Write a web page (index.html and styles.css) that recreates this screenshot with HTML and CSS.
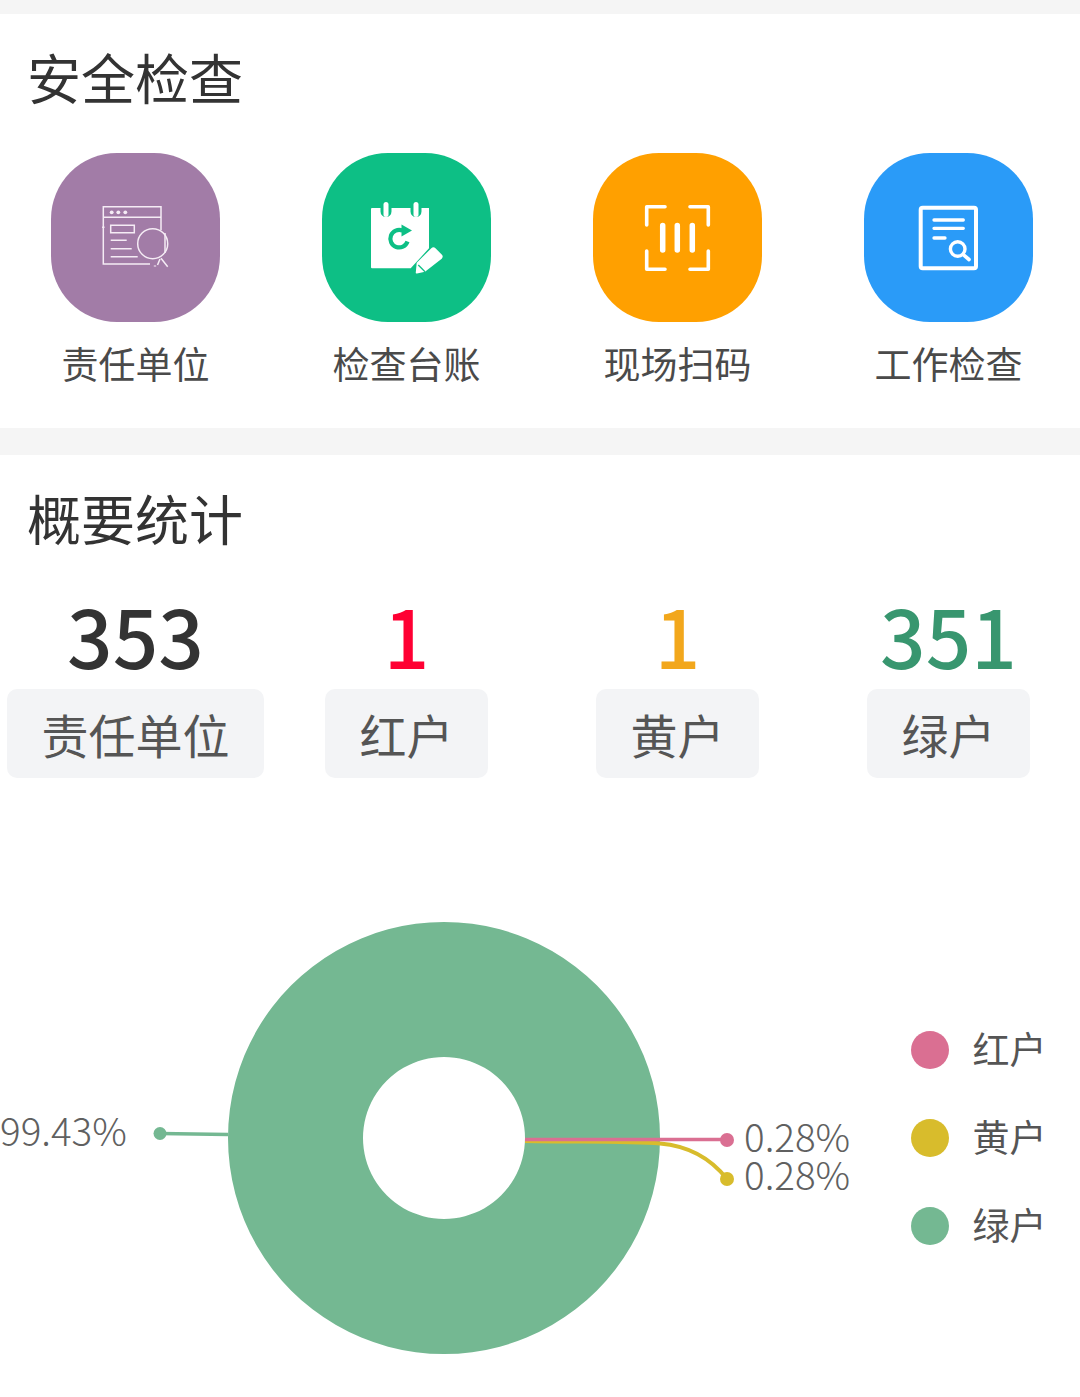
FILE: index.html
```html
<!DOCTYPE html>
<html lang="zh-CN">
<head>
<meta charset="utf-8">
<title>安全检查</title>
<link rel="stylesheet" href="styles.css">
</head>
<body>
<main class="page">
  <section class="card card-safety">
    <h2 class="title">安全检查</h2>
    <div class="grid grid-icons">
      <a class="entry">
        <span class="tile tile-purple">
          <svg class="glyph" viewBox="0 0 169 169" fill="none" stroke="#f5ecf5" stroke-width="1.500">
            <path d="M99 111H52.300V53.700H110V77"/>
            <path d="M52.300 64.300H110"/>
            <circle cx="60.700" cy="59.300" r="1.900" fill="#f5ecf5" stroke="none"/>
            <circle cx="67.300" cy="59.300" r="1.900" fill="#f5ecf5" stroke="none"/>
            <circle cx="74.300" cy="59.300" r="1.900" fill="#f5ecf5" stroke="none"/>
            <path d="M59.700 72.300H83.300V79.700H59.700z"/>
            <path d="M59.700 87.300H75.700M59.700 95.700H80.700M59.700 103.700H86.700"/>
            <circle cx="101.700" cy="90.700" r="15"/>
            <path d="M114 80V100M110 105.300L116.700 113.700M109 106L106.500 112"/>
            <path d="M104 112.500V113.500M52.300 73.500V75" stroke-width="2.400"/>
          </svg>
        </span>
        <span class="entry-label">责任单位</span>
      </a>
      <a class="entry">
        <span class="tile tile-green">
          <svg class="glyph" viewBox="0 0 169 169">
            <path fill="#fff" d="M50 55H58.500V58.500A5.500 5.500 0 0 0 69.500 58.500V55H88.500V58.500A5.500 5.500 0 0 0 99.500 58.500V55H107V95.300L88.700 115.300H50A1 1 0 0 1 49 114.300V56A1 1 0 0 1 50 55Z"/>
            <rect x="61.500" y="49" width="5" height="15" rx="2.500" fill="#fff"/>
            <rect x="91.500" y="49" width="5" height="15" rx="2.500" fill="#fff"/>
            <path fill="none" stroke="#0dbf85" stroke-width="4.200" d="M85.500 88.500A8.800 8.800 0 1 1 80.500 77.500"/>
            <path fill="#0dbf85" d="M79.500 71.500L90 77.500L79.500 83.500Z"/>
            <path fill="#fff" d="M109.300 95.300A3 3 0 0 1 113.500 95.300L119.700 101.500A3 3 0 0 1 119.700 105.700L103 118.700L95 120.500A1 1 0 0 1 93.800 119.300L94.700 109.700Z"/>
            <path fill="none" stroke="#0dbf85" stroke-width="1.300" d="M96.300 112L103 118.700"/>
          </svg>
        </span>
        <span class="entry-label">检查台账</span>
      </a>
      <a class="entry">
        <span class="tile tile-orange">
          <svg class="glyph" viewBox="0 0 169 169" fill="none" stroke="#fff" stroke-width="3.600" stroke-linecap="round" stroke-linejoin="round">
            <path d="M53.700 72V53.700H72M115.300 72V53.700H97M53.700 98V116.300H72M115.300 98V116.300H97"/>
            <path d="M69.700 72.500V97M84.300 72.500V97M99.300 72.500V97" stroke-width="5.500"/>
          </svg>
        </span>
        <span class="entry-label">现场扫码</span>
      </a>
      <a class="entry">
        <span class="tile tile-blue">
          <svg class="glyph" viewBox="0 0 169 169" fill="none" stroke="#fff" stroke-linecap="round">
            <rect x="56.700" y="54.700" width="55.300" height="60.600" rx="2" stroke-width="4"/>
            <path d="M70 67H99.300M70 75.300H99.300M70 85H81" stroke-width="3.300"/>
            <circle cx="93.700" cy="96" r="7.300" stroke-width="3.400"/>
            <path d="M99.300 101.700L105 106.500" stroke-width="3.600"/>
          </svg>
        </span>
        <span class="entry-label">工作检查</span>
      </a>
    </div>
  </section>

  <section class="card card-stats">
    <h2 class="title">概要统计</h2>
    <div class="grid grid-stats">
      <div class="stat"><span class="num">353</span><span class="pill">责任单位</span></div>
      <div class="stat"><span class="num num-red">1</span><span class="pill">红户</span></div>
      <div class="stat"><span class="num num-yellow">1</span><span class="pill">黄户</span></div>
      <div class="stat"><span class="num num-green">351</span><span class="pill">绿户</span></div>
    </div>
    <svg class="chart" viewBox="0 0 1080 619" width="1080" height="619">
      <g transform="translate(0 -778)">
        <path fill="#74b892" fill-rule="evenodd" d="M444 922a216 216 0 1 0 .01 0zM444 1057a81 81 0 1 1-.01 0z"/>
        <path d="M228 1134.500L160 1133.500" stroke="#74b892" stroke-width="3.500" fill="none"/>
        <circle cx="160" cy="1133.500" r="6.500" fill="#74b892"/>
        <path d="M525 1141C580 1142 630 1141 660 1143.500C690 1146 712 1160 727 1179" stroke="#d8bc2c" stroke-width="4" fill="none"/>
        <circle cx="727" cy="1179" r="7" fill="#d8bc2c"/>
        <path d="M525 1139.500H727" stroke="#da6f92" stroke-width="3.500" fill="none"/>
        <circle cx="727" cy="1140" r="7" fill="#da6f92"/>
        <text class="chart-pct" x="0" y="1146">99.43%</text>
        <text class="chart-pct" x="744" y="1152">0.28%</text>
        <text class="chart-pct" x="744" y="1190">0.28%</text>
        <circle cx="930" cy="1050" r="19" fill="#da6f92"/>
        <circle cx="930" cy="1138" r="19" fill="#d8bc2c"/>
        <circle cx="930" cy="1226" r="19" fill="#74b892"/>
        <text class="chart-legend" x="972.500" y="1064">红户</text>
        <text class="chart-legend" x="972.500" y="1152">黄户</text>
        <text class="chart-legend" x="972.500" y="1240">绿户</text>
      </g>
    </svg>
  </section>
</main>
</body>
</html>
```
FILE: styles.css
```css
* { box-sizing: border-box; }
html, body { margin: 0; padding: 0; }
body {
  width: 1080px;
  height: 1397px;
  overflow: hidden;
  background: #f5f5f5;
  font-family: "Noto Sans CJK SC", "Noto Sans", sans-serif;
  color: #333;
}
.page { display: flex; flex-direction: column; gap: 27px; padding-top: 14px; }
.card { background: #fff; width: 1080px; }
.card-safety { height: 414px; }
.card-stats { height: 942px; }
.title {
  margin: 0;
  padding: 33px 0 0 27px;
  font-size: 54px;
  font-weight: 400;
  line-height: 60px;
  color: #333;
}
.grid { display: grid; grid-template-columns: repeat(4, 271px); }
.grid-icons { margin-top: 46px; }
.entry { display: flex; flex-direction: column; align-items: center; }
.tile {
  width: 169px;
  height: 169px;
  border-radius: 66px;
  display: block;
}
.tile-purple { background: #a27ca7; }
.tile-green { background: #0dbf85; }
.tile-orange { background: #ffa000; }
.tile-blue { background: #2a9bf8; }
.glyph { width: 169px; height: 169px; display: block; }
.entry-label {
  margin-top: 16px;
  font-size: 37px;
  line-height: 50px;
  color: #4a4a4a;
}
.grid-stats { margin-top: 31px; }
.stat { display: flex; flex-direction: column; align-items: center; }
.num {
  font-size: 80px;
  font-weight: 500;
  line-height: 110px;
  color: #333;
}
.num-red { color: #ff0033; }
.num-yellow { color: #f2a71c; }
.num-green { color: #38966f; }
.pill {
  background: #f3f4f6;
  border-radius: 10px;
  height: 89px;
  padding: 0 34.500px;
  font-size: 47px;
  line-height: 90px;
  color: #555;
}
.chart { display: block; }
.chart-pct {
  font-family: "Noto Sans CJK SC", "Noto Sans", sans-serif;
  font-size: 38.600px;
  font-weight: 300;
  fill: #606060;
}
.chart-legend {
  font-family: "Noto Sans CJK SC", "Noto Sans", sans-serif;
  font-size: 37px;
  fill: #555;
}
```
